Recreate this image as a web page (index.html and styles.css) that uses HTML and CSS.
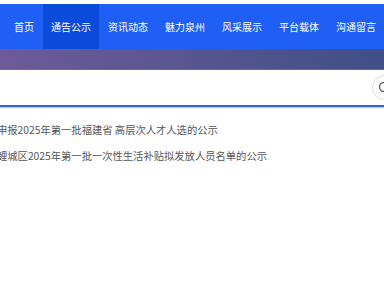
FILE: index.html
```html
<!DOCTYPE html>
<html lang="zh">
<head>
<meta charset="utf-8">
<link rel="stylesheet" href="styles.css">
</head>
<body>
<div class="top"></div>
<nav class="nav">
  <a class="item">首页</a>
  <a class="item active">通告公示</a>
  <a class="item">资讯动态</a>
  <a class="item">魅力泉州</a>
  <a class="item">风采展示</a>
  <a class="item">平台载体</a>
  <a class="item">沟通留言</a>
</nav>
<div class="band"></div>
<div class="search">
  <div class="btn">
    <svg width="14" height="14" viewBox="0 0 14 14"><circle cx="6" cy="6" r="4.5" fill="none" stroke="#666" stroke-width="1.4"/><path d="M9.3 9.3 L13 13" stroke="#666" stroke-width="1.4"/></svg>
  </div>
</div>
<ul class="list">
  <li>申报2025年第一批福建省 高层次人才人选的公示</li>
  <li>鲤城区2025年第一批一次性生活补贴拟发放人员名单的公示</li>
</ul>
</body>
</html>
```
FILE: styles.css
```css
html, body {
  margin: 0;
  padding: 0;
  background: #fff;
  overflow: hidden;
  width: 384px;
  height: 288px;
  font-family: "Noto Sans CJK SC", "Noto Sans", sans-serif;
}
.top {
  height: 4px;
  background: #fff;
}
.nav {
  height: 45px;
  background: #1f5ff6;
  display: flex;
  align-items: stretch;
  padding-left: 6px;
  gap: 1px;
}
.item {
  display: flex;
  align-items: center;
  padding: 0 8px;
  color: #fff;
  font-size: 10px;
  white-space: nowrap;
}
.active {
  background: #0b4bdc;
}
.band {
  height: 20px;
  background: linear-gradient(90deg, #6e5a98 0%, #5a5690 45%, #3f4f88 100%);
  border-bottom: 1px solid #6a6a90;
}
.search {
  height: 35px;
  border-bottom: 2px solid #3a62cc;
  box-shadow: 0 1px 1px #b8cdf5;
  display: flex;
  justify-content: flex-end;
  align-items: center;
  overflow: hidden;
}
.btn {
  width: 23px;
  height: 23px;
  border: 1px solid #dcdcdc;
  border-radius: 50%;
  margin-right: -13px;
  display: flex;
  align-items: center;
  justify-content: center;
  flex-shrink: 0;
}
.list {
  list-style: none;
  margin: 0;
  padding: 10px 0 0 0;
  margin-left: -3px;
}
.list li {
  height: 26px;
  line-height: 26px;
  font-size: 10.3px;
  color: #555;
  white-space: nowrap;
}
```
